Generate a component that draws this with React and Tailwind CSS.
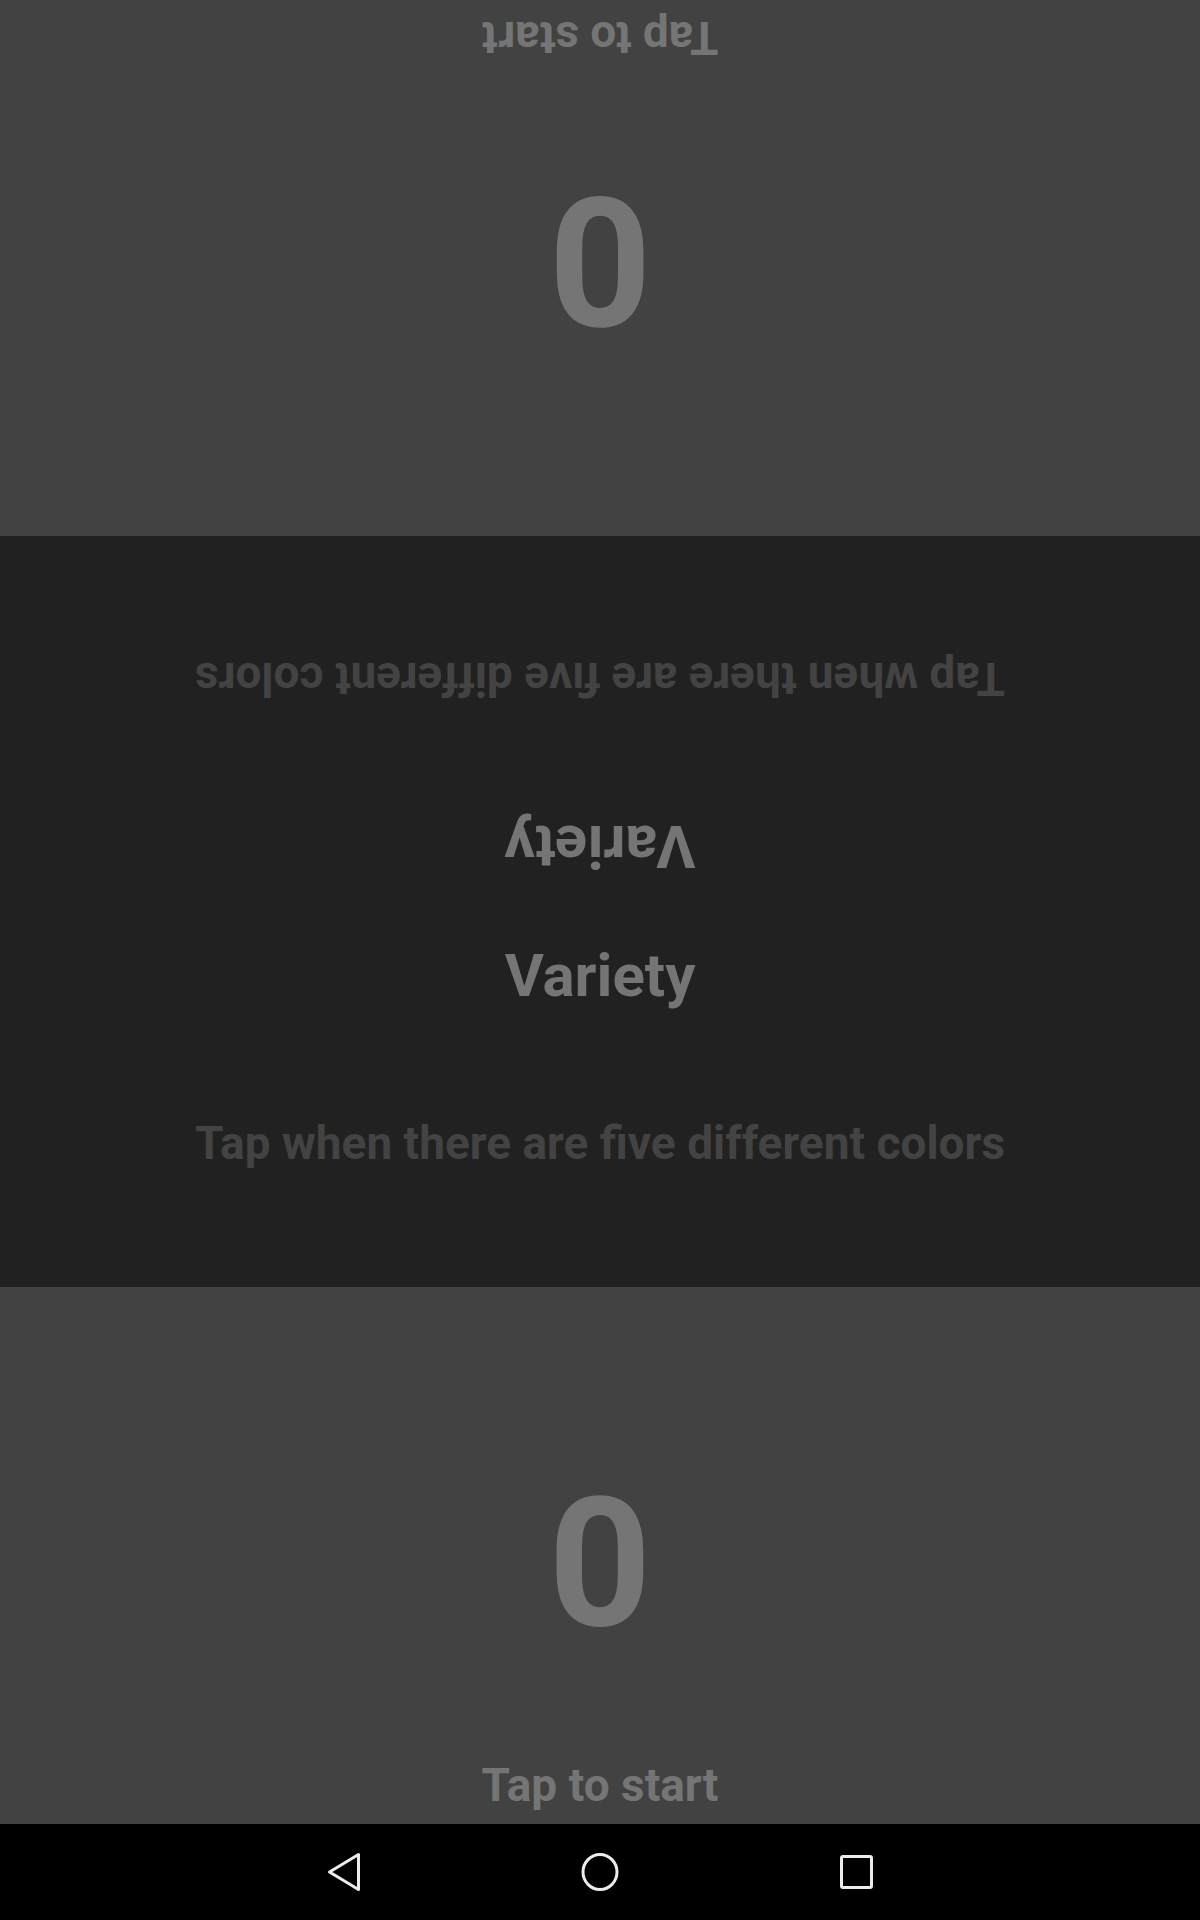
import React from "react"

function ScorePanel({ flipped, height }) {
  return (
    <div className={`${height} bg-[#424242] ${flipped ? "rotate-180" : ""}`}>
      <div className="flex flex-col items-center pt-[187px] font-bold text-[#757575]">
        <div className="text-[180px] leading-none">0</div>
        <div className="mt-[108px] text-[46px] leading-none">Tap to start</div>
      </div>
    </div>
  )
}

function ModeHalf({ flipped, height }) {
  return (
    <div className={`${height} flex flex-col items-center pt-[35px] font-bold ${flipped ? "rotate-180" : ""}`}>
      <div className="text-[60px] leading-none text-[#757575]">Variety</div>
      <div className="mt-[114px] text-[46px] leading-none text-[#434343]">Tap when there are five different colors</div>
    </div>
  )
}

function NavBar() {
  return (
    <div className="flex h-[96px] items-center justify-center gap-[208px] bg-black">
      <svg width="48" height="48" viewBox="0 0 48 48" fill="none" stroke="#ececec" strokeWidth="3" strokeLinejoin="round">
        <path d="M9.5 24 L38.5 6.5 L38.5 41.5 Z" />
      </svg>
      <svg width="48" height="48" viewBox="0 0 48 48" fill="none" stroke="#ececec" strokeWidth="3">
        <ellipse cx="24" cy="24" rx="17" ry="17.5" />
      </svg>
      <svg width="48" height="48" viewBox="0 0 48 48" fill="none" stroke="#ececec" strokeWidth="3">
        <rect x="9.5" y="8.5" width="30" height="31" rx="1.5" />
      </svg>
    </div>
  )
}

export default function App() {
  return (
    <div className="w-[1200px] h-[1920px] overflow-hidden font-['Roboto',sans-serif]">
      <ScorePanel flipped height="h-[536px]" />
      <div className="bg-[#212121]">
        <ModeHalf flipped height="h-[375px]" />
        <ModeHalf height="h-[376px]" />
      </div>
      <ScorePanel height="h-[537px]" />
      <NavBar />
    </div>
  )
}
